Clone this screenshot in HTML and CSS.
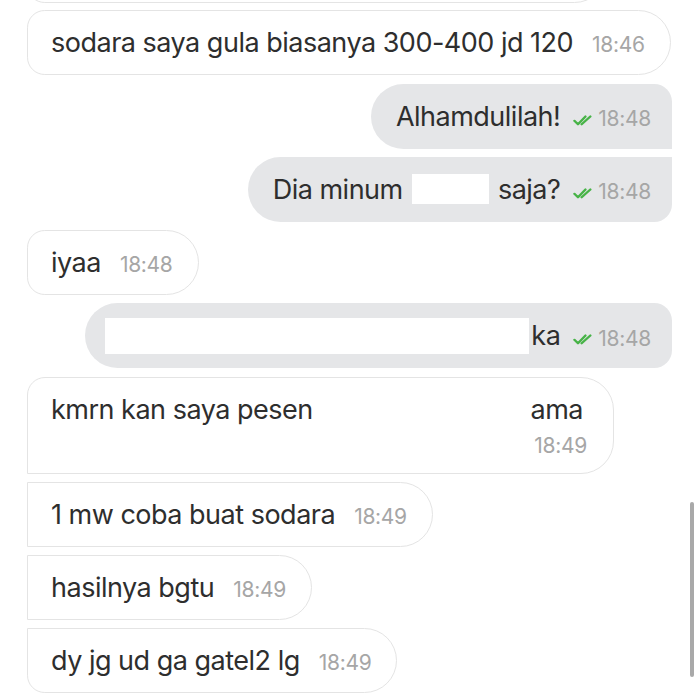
FILE: index.html
```html
<!DOCTYPE html>
<html>
<head>
<meta charset="utf-8">
<link rel="stylesheet" href="styles.css">
</head>
<body>
<div class="chat">
  <div class="bubble in peek"><span class="msg">&nbsp;</span></div>

  <div class="bubble in"><span class="msg">sodara saya gula biasanya 300-400 jd 120</span><span class="time">18:46</span></div>

  <div class="bubble out first"><span class="msg">Alhamdulilah!</span><svg class="check" viewBox="0 0 16 10" width="19" height="11" preserveAspectRatio="none"><path d="M1.2 5.3 L4.2 8.4 L10.5 1.4 M7.3 8.4 L14.6 1.4" fill="none" stroke="#47b347" stroke-width="2" stroke-linecap="round" stroke-linejoin="round"/></svg><span class="time">18:48</span></div>

  <div class="bubble out last"><span class="msg">Dia minum <span class="redact r1"></span> saja?</span><svg class="check" viewBox="0 0 16 10" width="19" height="11" preserveAspectRatio="none"><path d="M1.2 5.3 L4.2 8.4 L10.5 1.4 M7.3 8.4 L14.6 1.4" fill="none" stroke="#47b347" stroke-width="2" stroke-linecap="round" stroke-linejoin="round"/></svg><span class="time">18:48</span></div>

  <div class="bubble in"><span class="msg">iyaa</span><span class="time">18:48</span></div>

  <div class="bubble out solo"><span class="msg"><span class="redact r2"></span>ka</span><svg class="check" viewBox="0 0 16 10" width="19" height="11" preserveAspectRatio="none"><path d="M1.2 5.3 L4.2 8.4 L10.5 1.4 M7.3 8.4 L14.6 1.4" fill="none" stroke="#47b347" stroke-width="2" stroke-linecap="round" stroke-linejoin="round"/></svg><span class="time">18:48</span></div>

  <div class="bubble in tall first">
    <div class="wrap">
      <div class="line"><span class="msg">kmrn kan saya pesen</span><span class="msg">ama</span></div>
      <div class="tline"><span class="time">18:49</span></div>
    </div>
  </div>

  <div class="bubble in mid"><span class="msg">1 mw coba buat sodara</span><span class="time">18:49</span></div>

  <div class="bubble in mid"><span class="msg">hasilnya bgtu</span><span class="time">18:49</span></div>

  <div class="bubble in last"><span class="msg">dy jg ud ga gatel2 lg</span><span class="time">18:49</span></div>
</div>
<div class="scrollbar"></div>
</body>
</html>
```

FILE: styles.css
```css
html, body {
  margin: 0;
  padding: 0;
  background: #ffffff;
  width: 700px;
  height: 700px;
  overflow: hidden;
}

body {
  font-family: "Inter", "Liberation Sans", sans-serif;
  color: #2e2e2e;
  position: relative;
}

.chat {
  display: flex;
  flex-direction: column;
  gap: 8.25px;
  padding: 10px 28px 0 27px;
}

.bubble {
  box-sizing: border-box;
  height: 65px;
  display: flex;
  align-items: baseline;
  width: fit-content;
  white-space: nowrap;
}

.msg {
  font-size: 27px;
  line-height: 32px;
  letter-spacing: -0.5px;
}

.time {
  font-size: 21px;
  color: #a6a6a6;
  margin-left: 19px;
  letter-spacing: -0.3px;
}

.in {
  background: #ffffff;
  border: 1px solid #e4e4e4;
  border-radius: 18px 33px 33px 18px;
  padding: 16px 25px 0 23px;
}

.in.peek {
  margin-top: -72px;
  width: 580px;
  margin-bottom: -1px;
}

.in.first {
  border-bottom-left-radius: 0;
}

.in.mid {
  border-radius: 0 33px 33px 0;
}

.in.last {
  border-top-left-radius: 0;
}

.out {
  align-self: flex-end;
  background: #e5e6e8;
  border-radius: 33px 18px 18px 33px;
  padding: 17px 21px 0 25px;
}

.out.first {
  border-bottom-right-radius: 0;
}

.out.last {
  border-top-right-radius: 0;
}

.out .check {
  align-self: flex-start;
  margin-top: 14px;
  margin-left: 13px;
  flex: none;
}

.out .time {
  margin-left: 6px;
}

.redact {
  display: inline-block;
  background: #ffffff;
  vertical-align: middle;
}

.r1 {
  width: 77px;
  height: 30px;
  margin: 0 2px 0 2px;
  position: relative;
  top: -2px;
}

.r2 {
  width: 424px;
  height: 36px;
  margin-left: -5px;
  margin-right: 2px;
  position: relative;
  top: -2px;
}

.tall {
  height: 97px;
  padding-top: 16px;
  padding-right: 26px;
}

.wrap {
  display: flex;
  flex-direction: column;
  width: 536px;
}

.line {
  display: flex;
  justify-content: space-between;
  padding-right: 4px;
}

.tline {
  display: flex;
  justify-content: flex-end;
  margin-top: 7px;
}

.tline .time {
  margin-left: 0;
}

.scrollbar {
  position: absolute;
  left: 690px;
  top: 502px;
  width: 4px;
  height: 175px;
  border-radius: 2px;
  background: #a9a9a9;
}
```
